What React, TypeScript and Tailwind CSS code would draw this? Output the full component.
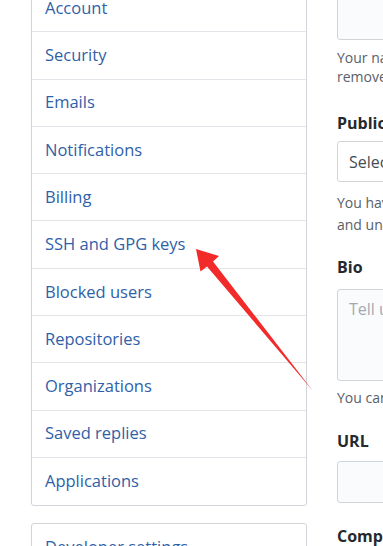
import React from 'react';

const NAV = [
  'Account',
  'Security',
  'Emails',
  'Notifications',
  'Billing',
  'SSH and GPG keys',
  'Blocked users',
  'Repositories',
  'Organizations',
  'Saved replies',
  'Applications',
];

const font = { fontFamily: '"Open Sans", "Noto Sans", sans-serif' };

const App: React.FC = () => {
  return (
    <div className="relative w-[383px] h-[546px] overflow-hidden bg-white" style={font}>
      <div className="flex gap-[30px] pl-[31px] -mt-[16px]">
        {/* sidebar */}
        <div className="w-[276px] shrink-0 flex flex-col gap-[17px]">
          <nav className="border border-[#d1d5da] rounded-[3px]">
            {NAV.map((label, i) => (
              <a
                key={label}
                className={
                  'flex items-center h-[47.3px] pl-[13px] text-[16.5px] text-[#2f5fa8] ' +
                  (i < NAV.length - 1 ? 'border-b border-[#e1e4e8]' : '')
                }
              >
                {label}
              </a>
            ))}
          </nav>
          <nav className="border border-[#d1d5da] rounded-[3px]">
            <a className="flex items-center h-[47px] pl-[13px] text-[16.5px] text-[#2f5fa8]">
              Developer settings
            </a>
          </nav>
        </div>

        {/* profile form */}
        <div className="w-[440px] shrink-0 flex flex-col text-[#24292e]">
          <div className="h-[56px] border border-[#d1d5da] rounded-[3px] bg-[#fafbfc]" />
          <p className="mt-[8px] text-[14px] leading-[19px] text-[#586069] whitespace-nowrap">
            Your name may appear around GitHub where you contribute or are mentioned. You can
            <br />
            remove it at any time.
          </p>

          <label className="mt-[25px] text-[16px] font-bold leading-[24px]">Public email</label>
          <div className="mt-[6px] h-[41px] border border-[#d1d5da] rounded-[3px] bg-white flex items-center pl-[11px] text-[16px] text-[#444d56]">
            Select a verified email to display
          </div>
          <p className="mt-[10px] text-[14px] leading-[22px] text-[#586069] whitespace-nowrap">
            You have set your email address to private. To toggle email privacy, go to email settings
            <br />
            and uncheck "Keep my email address private."
          </p>

          <label className="mt-[19px] text-[16px] font-bold leading-[24px]">Bio</label>
          <div className="mt-[10px] h-[92px] border border-[#d1d5da] rounded-[3px] bg-[#fafbfc] pl-[11px] pt-[7px] text-[16px] text-[#a3aab1]">
            Tell us a little bit about yourself
          </div>
          <p className="mt-[6px] text-[14px] leading-[22px] text-[#586069] whitespace-nowrap">
            You can @mention other users and organizations to link to them.
          </p>

          <label className="mt-[20px] text-[16px] font-bold leading-[24px]">URL</label>
          <div className="mt-[8px] h-[42px] border border-[#d1d5da] rounded-[3px] bg-[#fafbfc]" />

          <label className="mt-[21px] text-[16px] font-bold leading-[24px]">Company</label>
        </div>
      </div>

      {/* annotation arrow */}
      <svg className="absolute left-0 top-0 pointer-events-none" width="383" height="546" viewBox="0 0 383 546">
        <polygon
          points="196,249 219,256 213,261.5 313,391 207,266.5 200.5,271.5"
          fill="#f22a2a"
        />
      </svg>
    </div>
  );
};

export default App;
